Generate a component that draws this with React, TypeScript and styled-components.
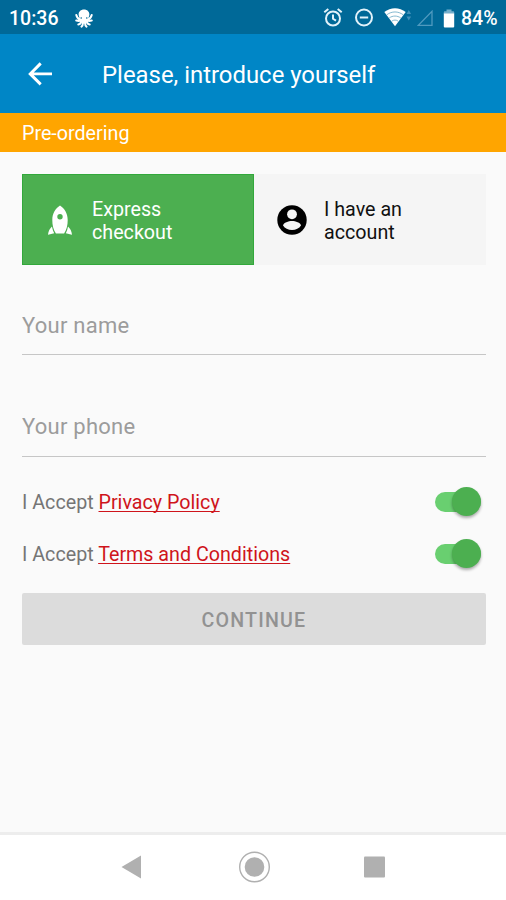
import React, { useState } from 'react';
import styled, { createGlobalStyle } from 'styled-components';

const GlobalStyle = createGlobalStyle`
  * { box-sizing: border-box; }
  body { margin: 0; background: #fafafa; font-family: Roboto, "Liberation Sans", sans-serif; }
  button, input { font-family: inherit; border: 0; margin: 0; padding: 0; background: none; border-radius: 0; }
  svg { display: block; flex: none; }
`;

const Screen = styled.div`
  width: 506px;
  height: 900px;
  display: flex;
  flex-direction: column;
  overflow: hidden;
  background: #fafafa;
`;

const StatusBar = styled.header`
  height: 34px;
  flex: none;
  display: flex;
  align-items: center;
  padding: 2px 8px 0 9px;
  background: #006998;
  color: #fff;
`;

const StatusText = styled.span<{ $width: number }>`
  width: ${(p) => p.$width}px;
  padding-top: 1px;
  font-size: 19.5px;
  font-weight: 500;
  line-height: 24px;
  white-space: nowrap;
`;

const StatusGroup = styled.div`
  display: flex;
  align-items: center;
  margin-left: auto;
`;

const StatusIcon = styled.span<{ $gap: number }>`
  display: block;
  margin-right: ${(p) => p.$gap}px;
`;

const AppBar = styled.nav`
  height: 79px;
  flex: none;
  display: flex;
  align-items: center;
  padding-left: 24px;
  background: #0086c6;
  color: #fff;
`;

const BackButton = styled.button`
  width: 32px;
  height: 32px;
  margin-right: 46px;
  color: #fff;
`;

const Title = styled.h1`
  margin: 2px 0 0;
  font-size: 23.9px;
  font-weight: 400;
  line-height: 30px;
  white-space: nowrap;
`;

const Banner = styled.div`
  height: 39px;
  flex: none;
  padding: 2px 22px 0;
  background: #ffa500;
  color: #fff;
  font-size: 19.7px;
  line-height: 37px;
`;

const Content = styled.main`
  flex: 1;
  display: flex;
  flex-direction: column;
  padding: 22px 20px 0 22px;
`;

const Tabs = styled.div`
  display: grid;
  grid-template-columns: 232px 232px;
  height: 91px;
`;

const Tab = styled.button<{ $active: boolean }>`
  display: flex;
  align-items: center;
  padding: 0 0 0 22px;
  gap: 16px;
  text-align: left;
  font-size: 19.7px;
  line-height: 23px;
  color: ${(p) => (p.$active ? '#fff' : '#111')};
  background: ${(p) => (p.$active ? '#4caf50' : '#f5f5f5')};
  box-shadow: ${(p) => (p.$active ? 'inset 0 0 0 1px #32a83b' : 'none')};
`;

const TabLabel = styled.span`
  width: 100px;
  padding-top: 2px;
`;

const Field = styled.input`
  width: 464px;
  height: 60px;
  margin-top: 30px;
  padding-top: 1px;
  border-bottom: 1px solid #c6c6c6;
  outline: none;
  color: #333;
  font-size: 22px;
  letter-spacing: 0.25px;
  &::placeholder { color: #9c9c9c; opacity: 1; }
  & + & { margin-top: 42px; padding: 0 0 1px; }
`;

const Consents = styled.div`
  display: flex;
  flex-direction: column;
  margin-top: 19px;
`;

const ConsentRow = styled.div`
  height: 52px;
  display: flex;
  align-items: center;
  justify-content: space-between;
  padding: 0 5px 1px 0;
  font-size: 19.7px;
  color: #757575;
`;

const ConsentText = styled.span`
  padding-top: 2px;
  white-space: nowrap;
`;

const PolicyLink = styled.a`
  color: #cf141b;
  text-decoration: underline;
  text-decoration-thickness: 1px;
  text-underline-offset: 2px;
  text-decoration-skip-ink: none;
`;

const Track = styled.button<{ $on: boolean }>`
  width: 46px;
  height: 20px;
  display: flex;
  align-items: center;
  justify-content: ${(p) => (p.$on ? 'flex-end' : 'flex-start')};
  border-radius: 10px;
  background: ${(p) => (p.$on ? '#69cf70' : '#bbb')};
`;

const Thumb = styled.span<{ $on: boolean }>`
  width: 29px;
  height: 29px;
  flex: none;
  border-radius: 50%;
  background: ${(p) => (p.$on ? '#4caf50' : '#eee')};
  box-shadow: 0 2px 3px rgba(0, 0, 0, 0.32);
`;

const ContinueButton = styled.button`
  width: 464px;
  height: 52px;
  margin-top: 13px;
  border-radius: 2px;
  background: #dcdcdc;
  color: #929292;
  font-size: 19.6px;
  font-weight: 500;
  letter-spacing: 1.2px;
  padding-top: 2px;
`;

const SystemNav = styled.footer`
  height: 68px;
  flex: none;
  display: flex;
  align-items: center;
  justify-content: space-between;
  padding: 0 120px 2px 121px;
  border-top: 3px solid #ededed;
  background: #fff;
`;

const OctopusIcon = () => (
  <svg width="18" height="19" viewBox="0 0 18 19" fill="none" stroke="#fff" strokeWidth="2" strokeLinecap="round">
    <path d="M9 .4c3.300 0 5.400 2.200 5.400 4.900 0 2-1 3.200-1.200 4.800-.1 2.700-1.900 4.500-4.200 4.500s-4.100-1.800-4.200-4.500C4.600 8.500 3.600 7.300 3.600 5.300 3.600 2.600 5.700.4 9 .4Z" fill="#fff" stroke="none" />
    <path d="M5 10.500C3 9.800 1.800 8.200 1.300 6M13 10.500c2-.7 3.200-2.300 3.700-4.500M5.500 11.500c-1.700.8-2.900.4-4.300 0M12.500 11.500c1.700.8 2.900.4 4.300 0M6 12c.2 2.200-1 3.200-2.700 3.400M12 12c-.2 2.200 1 3.200 2.700 3.400M7.900 13c.2 2.400-.3 3.800-1.400 4.600M10.100 13c-.2 2.400.3 3.800 1.400 4.600" />
    <circle cx="6.200" cy="9" r=".8" fill="#006998" stroke="none" />
    <circle cx="11.800" cy="9" r=".8" fill="#006998" stroke="none" />
  </svg>
);

const AlarmIcon = () => (
  <svg width="20" height="20" viewBox="0 0 20 20" fill="none" stroke="#e1f2fa" strokeWidth="2">
    <circle cx="10" cy="10.500" r="7" />
    <path d="M10 6.500v4.300l3 1.800M1.300 4.200l4-3.300M18.700 4.200l-4-3.300" />
  </svg>
);

const DoNotDisturbIcon = () => (
  <svg width="20" height="20" viewBox="0 0 20 20" fill="none" stroke="#e1f2fa" strokeWidth="2">
    <circle cx="10" cy="9.500" r="8" />
    <path d="M5.800 9.500h8.400" />
  </svg>
);

const WifiIcon = () => (
  <svg width="28" height="20" viewBox="0 0 28 20">
    <path d="M.3 4.100C6.500-1 15.500-1 21.700 4.100L11 18.300Z" fill="#fff" />
    <path d="M2.800 6.800c4.900-3.800 11.500-3.800 16.400 0M5.200 10c3.500-2.600 8.100-2.600 11.600 0M7.700 13.200c2-1.500 4.600-1.500 6.600 0" fill="none" stroke="#66a7c4" strokeWidth=".8" />
    <path d="m24.800 2 2.300 4h-4.600ZM24.800 12.500l2.300-4h-4.600Z" fill="#4190b8" />
  </svg>
);

const SignalIcon = () => (
  <svg width="16" height="17" viewBox="0 0 16 17">
    <path d="M1.300 15.300H15V1.300Z" fill="none" stroke="#4f9abf" strokeWidth="1.300" />
  </svg>
);

const BatteryIcon = () => (
  <svg width="12" height="19" viewBox="0 0 12 19">
    <path d="M.8 5V3.300q0-1 1-1H3.500V.5h5v1.800h1.700q1 0 1 1V5Z" fill="#75afcc" />
    <path d="M.8 4.500h10.400v13q0 1-1 1H1.800q-1 0-1-1Z" fill="#fff" />
  </svg>
);

const ArrowIcon = () => (
  <svg width="32" height="32" viewBox="0 0 32 32" fill="none" stroke="currentColor" strokeWidth="2.900">
    <path d="M28 15.900H6.300M16.700 5.400 6.200 15.900l10.500 10.500" />
  </svg>
);

const RocketIcon = () => (
  <svg width="32" height="32" viewBox="0 0 32 32" fill="#fff">
    <path fillRule="evenodd" d="M16 1.500c4.400 3 7.700 7.700 7.700 14.500 0 5-1 9.500-3.600 13.500h-8.200C9.300 25.500 8.300 21 8.300 16c0-6.800 3.300-11.500 7.700-14.500Zm0 8.600a2.700 2.700 0 1 0 0 5.400 2.700 2.700 0 0 0 0-5.400Z" />
    <path d="M8 22.500c.5 2.500 1 4.500 2.200 6.700l-6.200 1.600c.4-3.600 1.700-6.300 4-8.300ZM24 22.500c-.5 2.500-1 4.500-2.200 6.700l6.200 1.600c-.4-3.600-1.700-6.300-4-8.300Z" />
  </svg>
);

const AccountIcon = () => (
  <svg width="32" height="32" viewBox="0 0 32 32">
    <circle cx="16" cy="16" r="14.700" fill="#000" />
    <circle cx="16" cy="10.300" r="4.900" fill="#f5f5f5" />
    <path d="M7 21.500c.5-3 5.500-4.600 9-4.600s8.500 1.600 9 4.600c-1.900 2.800-5 4.600-9 4.600s-7.100-1.800-9-4.600Z" fill="#f5f5f5" />
  </svg>
);

const NavBackIcon = () => (
  <svg width="20" height="24" viewBox="0 0 20 24" fill="#b0b0b0">
    <path d="M.5 12 20 .5v23Z" />
  </svg>
);

const NavHomeIcon = () => (
  <svg width="34" height="32" viewBox="0 0 34 32">
    <circle cx="18.500" cy="16" r="14.800" fill="none" stroke="#b0b0b0" strokeWidth="1.400" />
    <circle cx="18.500" cy="16" r="9.800" fill="#b0b0b0" />
  </svg>
);

const NavRecentIcon = () => (
  <svg width="22" height="22" viewBox="0 0 22 22">
    <rect x="0" y=".5" width="21" height="21" rx="1" fill="#b0b0b0" />
  </svg>
);

type ConsentProps = { label: string };

function Consent({ label }: ConsentProps) {
  const [on, setOn] = useState(true);
  return (
    <ConsentRow>
      <ConsentText>I Accept <PolicyLink>{label}</PolicyLink></ConsentText>
      <Track type="button" role="switch" aria-checked={on} aria-label={label} $on={on} onClick={() => setOn(!on)}>
        <Thumb $on={on} />
      </Track>
    </ConsentRow>
  );
}

export default function App() {
  const [express, setExpress] = useState(true);
  return (
    <>
      <GlobalStyle />
      <Screen>
        <StatusBar>
          <StatusText $width={66}>10:36</StatusText>
          <OctopusIcon />
          <StatusGroup>
            <StatusIcon $gap={11}><AlarmIcon /></StatusIcon>
            <StatusIcon $gap={10}><DoNotDisturbIcon /></StatusIcon>
            <StatusIcon $gap={5}><WifiIcon /></StatusIcon>
            <StatusIcon $gap={10}><SignalIcon /></StatusIcon>
            <StatusIcon $gap={6}><BatteryIcon /></StatusIcon>
            <StatusText $width={37}>84%</StatusText>
          </StatusGroup>
        </StatusBar>
        <AppBar>
          <BackButton type="button" aria-label="Back"><ArrowIcon /></BackButton>
          <Title>Please, introduce yourself</Title>
        </AppBar>
        <Banner>Pre-ordering</Banner>
        <Content>
          <Tabs>
            <Tab type="button" $active={express} onClick={() => setExpress(true)}>
              <RocketIcon />
              <TabLabel>Express checkout</TabLabel>
            </Tab>
            <Tab type="button" $active={!express} onClick={() => setExpress(false)}>
              <AccountIcon />
              <TabLabel>I have an account</TabLabel>
            </Tab>
          </Tabs>
          <Field placeholder="Your name" />
          <Field placeholder="Your phone" />
          <Consents>
            <Consent label="Privacy Policy" />
            <Consent label="Terms and Conditions" />
          </Consents>
          <ContinueButton type="button">CONTINUE</ContinueButton>
        </Content>
        <SystemNav>
          <NavBackIcon />
          <NavHomeIcon />
          <NavRecentIcon />
        </SystemNav>
      </Screen>
    </>
  );
}
